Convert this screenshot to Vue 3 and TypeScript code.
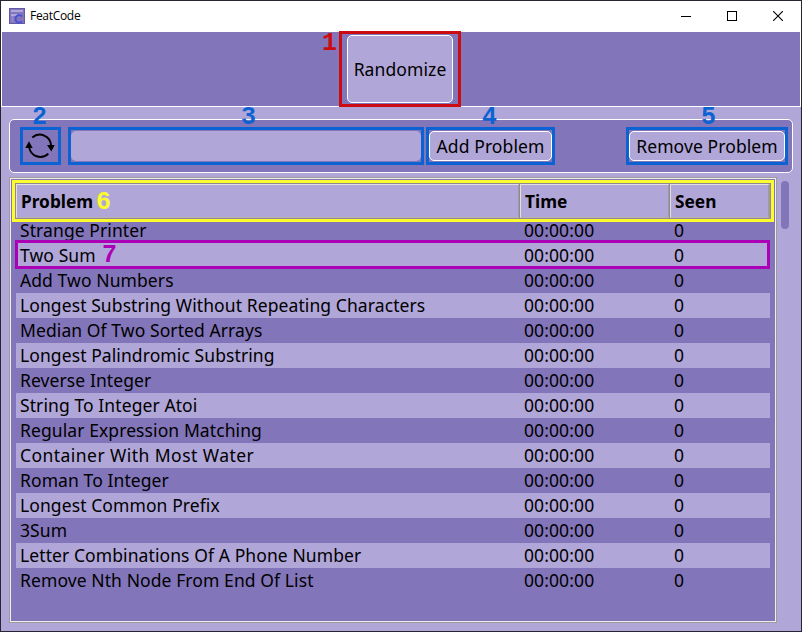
<script setup lang="ts">
interface Problem {
  name: string
  time: string
  seen: number
}

const names: string[] = [
  'Strange Printer',
  'Two Sum',
  'Add Two Numbers',
  'Longest Substring Without Repeating Characters',
  'Median Of Two Sorted Arrays',
  'Longest Palindromic Substring',
  'Reverse Integer',
  'String To Integer Atoi',
  'Regular Expression Matching',
  'Container With Most Water',
  'Roman To Integer',
  'Longest Common Prefix',
  '3Sum',
  'Letter Combinations Of A Phone Number',
  'Remove Nth Node From End Of List',
]
const problems: Problem[] = names.map((name) => ({ name, time: '00:00:00', seen: 0 }))
</script>

<template>
  <div class="window">
    <header class="titlebar">
      <svg class="logo" width="16" height="16" viewBox="0 0 16 16">
        <rect width="16" height="16" fill="#6658a8" />
        <rect x="1" y="1" width="14" height="14" fill="#8375b9" />
        <path d="M2 3H14M2 7H8" stroke="#b0a6d8" stroke-width="2" fill="none" />
        <path d="M3.500 8V14" stroke="#9689c8" stroke-width="2" fill="none" />
        <path d="M13 8.500A3.700 3.700 0 1 0 13 13.200" stroke="#4650d8" stroke-width="1.800" fill="none" />
      </svg>
      <span class="title">FeatCode</span>
      <div class="controls">
        <svg width="10" height="10"><path d="M0 5.5H10" stroke="#000" /></svg>
        <svg width="10" height="10"><rect x=".5" y=".5" width="9" height="9" fill="none" stroke="#000" /></svg>
        <svg width="10" height="10"><path d="M0 0L10 10M10 0L0 10" stroke="#000" stroke-width="1.1" /></svg>
      </div>
    </header>

    <section class="top">
      <div class="mark red">
        <b class="num n1">1</b>
        <button class="btn big"><span class="label">Randomize</span></button>
      </div>
    </section>

    <section class="tools">
      <div class="mark blue refresh">
        <b class="num n2">2</b>
        <svg width="30" height="26" viewBox="0 0 30 26">
          <g fill="none" stroke="#000" stroke-width="2">
            <path d="M7.300 4.600A11.200 11.200 0 0 1 26 12.500" />
            <path d="M23.300 20.600A11.200 11.200 0 0 1 4.200 14" />
          </g>
          <path d="M22 12H29.700L26.300 18.500ZM0.300 15H7.700L4 8.300Z" />
        </svg>
      </div>
      <div class="mark blue search">
        <b class="num n3">3</b>
        <input class="field" type="text" />
      </div>
      <div class="mark blue add">
        <b class="num n4">4</b>
        <button class="btn"><span class="label">Add Problem</span></button>
      </div>
      <div class="mark blue remove">
        <b class="num n5">5</b>
        <button class="btn"><span class="label">Remove Problem</span></button>
      </div>
    </section>

    <main class="content">
      <div class="table">
        <div class="head">
          <div class="cell">Problem<b class="num n6">6</b></div>
          <div class="cell">Time</div>
          <div class="cell">Seen</div>
        </div>
        <div class="rows">
          <div v-for="(p, i) in problems" :key="p.name" class="row" :class="{ light: i % 2 === 1, wide: i === 9 }">
            <span class="name">{{ p.name }}</span>
            <span class="time">{{ p.time }}</span>
            <span>{{ p.seen }}</span>
            <div v-if="i === 1" class="outline"><b class="num n7">7</b></div>
          </div>
        </div>
      </div>
      <div class="thumb"></div>
    </main>
  </div>
</template>

<style>
body {
  margin: 0;
  overflow: hidden;
}
</style>

<style scoped>
* {
  box-sizing: border-box;
}
.window {
  width: 802px;
  height: 632px;
  display: flex;
  flex-direction: column;
  border: 1px solid #292431;
  background: #b0a6d8;
  color: #000;
  font-family: 'Noto Sans', sans-serif;
  font-size: 17.5px;
}
.titlebar {
  height: 31px;
  flex: none;
  display: flex;
  align-items: center;
  background: #fff;
  padding: 0 18px 2px 8px;
}
.title {
  margin-left: 5px;
  font: 12px 'Open Sans', sans-serif;
  letter-spacing: -0.3px;
}
.controls {
  margin-left: auto;
  display: flex;
  gap: 36px;
}
.controls svg {
  display: block;
}
.top {
  height: 75px;
  flex: none;
  display: flex;
  padding-left: 337px;
  background: #8375b9;
  border: 1px solid #fff;
  border-top: 0;
}
.mark {
  position: relative;
  flex: none;
  display: flex;
}
.red {
  width: 122px;
  height: 76px;
  margin-top: -1px;
  padding: 1px 5px;
  border: 3px solid #cb0c10;
}
.blue {
  height: 38px;
  padding: 1px 0;
  border: 3px solid #0b62d2;
}
.btn {
  flex: 1;
  display: flex;
  justify-content: center;
  align-items: center;
  padding: 0;
  margin: 0;
  border: 1px solid #fff;
  border-radius: 5px;
  background: #b0a6d8;
  color: #000;
  font: inherit;
  letter-spacing: 0.1px;
  white-space: nowrap;
}
.big {
  padding-bottom: 1px;
}
.tools {
  flex: none;
  height: 54px;
  margin: 12px 8px 0;
  padding: 7px 4px 0 10px;
  display: flex;
  background: #8375b9;
  border: 1px solid #fff;
  border-radius: 5px;
}
.refresh {
  width: 41px;
  padding: 3px 2px;
}
.refresh svg {
  display: block;
  flex: none;
}
.search {
  width: 356px;
  margin-left: 7px;
}
.field {
  width: 100%;
  height: 30px;
  padding: 0;
  border: 0;
  border-radius: 5px;
  background: #b0a6d8;
}
.add {
  width: 129px;
  margin-left: 2px;
}
.remove {
  width: 162px;
  margin-left: auto;
}
.content {
  display: flex;
  margin: 4px 12px 0 8px;
}
.table {
  width: 768px;
  height: 446px;
  padding: 1px 2px;
  background: #8375b9;
  border: 1px solid #a09a9c;
  box-shadow: inset 0 0 0 1px #f0eee8;
}
.head {
  height: 42px;
  width: 762px;
  margin-top: 1px;
  padding: 1px 0 1px 1px;
  border: 3px solid #fbfb2e;
  display: grid;
  grid-template-columns: 504px 150px 100px;
  font-size: 17.3px;
  font-weight: 700;
}
.cell {
  position: relative;
  display: flex;
  align-items: center;
  height: 34px;
  padding-left: 4px;
  border: 1px solid #e3dfe0;
  border-right: 2px solid #a09a9c;
  border-bottom-color: #b9b3a9;
  box-shadow: 0 0 0 1px #8e8896;
  background: #b0a6d8;
}
.rows {
  width: 754px;
  margin: -4px 0 0 4px;
}
.row {
  position: relative;
  height: 25px;
  line-height: 25px;
  display: grid;
  grid-template-columns: 504px 150px 1fr;
  padding-left: 4px;
  white-space: nowrap;
}
.name {
  letter-spacing: 0.09px;
}
.wide .name {
  letter-spacing: 0.45px;
}
.time {
  letter-spacing: 0.1px;
}
.row.light {
  background: #b0a6d8;
}
.row:first-child {
  clip-path: inset(4px 0 0 0);
}
.outline {
  position: absolute;
  inset: -3px 0 -1px -1px;
  border: 3px solid #ab00b5;
}
.thumb {
  width: 8px;
  height: 48px;
  margin: 4px 0 0 4px;
  border-radius: 4px;
  background: #8375b9;
}
.num {
  position: absolute;
  font: 700 25px/24px 'Liberation Mono', monospace;
}
.n1 {
  left: -20px;
  top: -2px;
  color: #cb0c10;
}
.n2,
.n3,
.n4,
.n5 {
  top: -24px;
  color: #0b62d2;
}
.n2 {
  left: 9px;
}
.n3 {
  left: 170px;
}
.n4 {
  left: 53px;
}
.n5 {
  left: 72px;
}
.n6 {
  left: 79px;
  top: 6px;
  color: #fbfb2e;
}
.n7 {
  left: 84px;
  top: 1px;
  color: #ab00b5;
}
</style>
